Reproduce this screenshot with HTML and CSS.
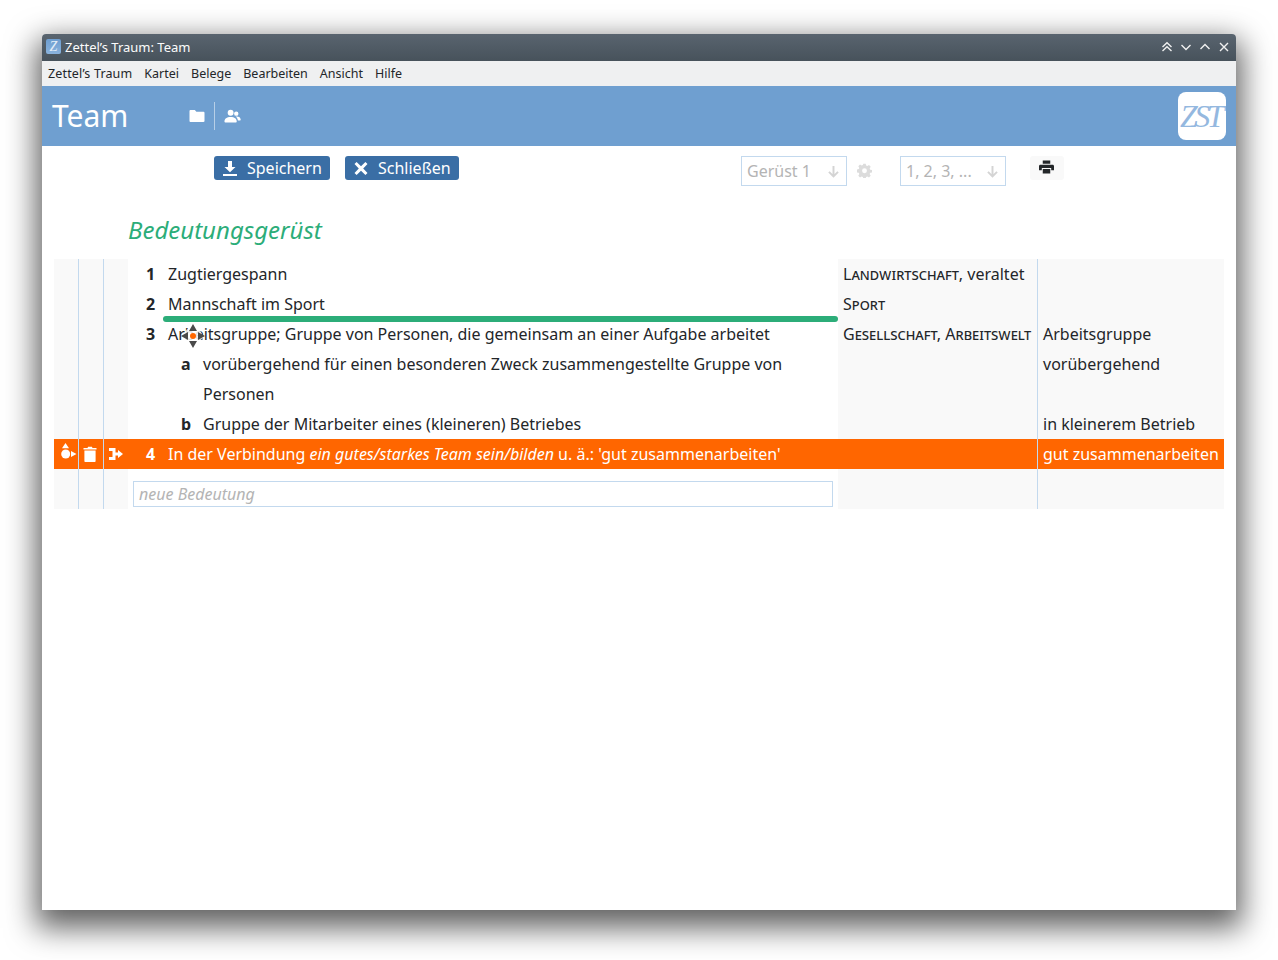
FILE: index.html
```html
<!DOCTYPE html>
<html lang="de">
<head>
<meta charset="utf-8">
<title>Zettel's Traum: Team</title>
<link rel="stylesheet" href="styles.css">
</head>
<body>
<div class="window">
  <div class="titlebar">
    <span class="app-icon">Z</span>
    <span class="title-text">Zettel’s Traum: Team</span>
    <div class="win-controls">
      <svg viewBox="0 0 12 12" class="win-btn"><path d="M1.5 6 6 1.8 10.5 6M1.5 10 6 5.8 10.5 10"/></svg>
      <svg viewBox="0 0 12 12" class="win-btn"><path d="M1.5 4 6 8.5 10.5 4"/></svg>
      <svg viewBox="0 0 12 12" class="win-btn"><path d="M1.5 8 6 3.5 10.5 8"/></svg>
      <svg viewBox="0 0 12 12" class="win-btn"><path d="M2 2l8 8M10 2l-8 8"/></svg>
    </div>
  </div>
  <div class="menubar">
    <span class="menu-first">Zettel’s Traum</span><span>Kartei</span><span>Belege</span><span>Bearbeiten</span><span>Ansicht</span><span>Hilfe</span>
  </div>
  <header class="header">
    <h1 class="lemma">Team</h1>
    <div class="header-icons">
      <svg class="hicon folder" viewBox="0 0 16 14"><path d="M1.4 1h4.4l1.6 1.8h7.2c.5 0 .9.4.9.9v8.4c0 .5-.4.9-.9.9H1.4c-.5 0-.9-.4-.9-.9V1.900c0-.5.4-.9.900-.9z"/></svg>
      <span class="hsep"></span>
      <svg class="hicon users" viewBox="0 0 18 14"><circle cx="7" cy="3.600" r="3.100"/><path d="M.5 13c0-3.400 2.400-5 6.500-5s6.500 1.600 6.500 5c0 .5-.4.9-.9.900H1.400c-.5 0-.9-.4-.9-.9z"/><circle cx="13" cy="4.500" r="2.300"/><path d="M12.300 7.500c3.300-.3 5.400.9 5.400 3.500 0 .4-.3.700-.7.700h-2.300c-.2-1.800-1-3.100-2.400-4.200z"/></svg>
    </div>
    <div class="logo"><span>ZST</span></div>
  </header>
  <div class="toolbar">
    <button class="btn btn-save">
      <svg class="btn-icon" viewBox="0 0 16 16"><path d="M6 1h4v6h3.500L8 12.300 2.500 7H6zM1 14h14v2H1z"/></svg>Speichern
    </button>
    <button class="btn btn-close">
      <svg class="btn-icon" viewBox="0 0 16 16"><path d="M3.600 2 8 6.300 12.400 2 14.500 4.100 10.200 8.500l4.300 4.400-2.100 2.100L8 10.700 3.600 15l-2.100-2.100 4.300-4.400-4.300-4.400z"/></svg>Schließen
    </button>
    <div class="select sel-geruest"><span>Gerüst 1</span><svg class="arrow" viewBox="0 0 12 12"><path d="M6 1v9.500M1.800 6.300 6 10.500l4.200-4.200"/></svg></div>
    <svg class="gear" viewBox="0 0 16 16"><path fill-rule="evenodd" d="M6.700.7h2.600l.4 2 1.300.6 1.800-1.100 1.800 1.800-1.100 1.800.6 1.300 2 .4v2.600l-2 .4-.6 1.300 1.100 1.800-1.800 1.800-1.800-1.100-1.300.6-.4 2H6.700l-.4-2-1.300-.6-1.800 1.100-1.800-1.800 1.100-1.800-.6-1.300-2-.4V6.900l2-.4.6-1.300-1.100-1.800 1.800-1.800 1.800 1.100 1.300-.6zM8 5.600a2.600 2.600 0 1 0 0 5.200 2.600 2.600 0 0 0 0-5.200z"/></svg>
    <div class="select sel-numbers"><span>1, 2, 3, ...</span><svg class="arrow" viewBox="0 0 12 12"><path d="M6 1v9.500M1.800 6.300 6 10.500l4.200-4.200"/></svg></div>
    <button class="print-btn" aria-label="Drucken">
      <svg viewBox="0 0 16 14"><path fill-rule="evenodd" d="M4 0h8v3.500H4zM1.500 4.500h13c.8 0 1.500.7 1.500 1.500v4.500h-3V8H3v2.500H0V6c0-.8.7-1.500 1.500-1.500zM4 9h8v5H4z"/></svg>
    </button>
  </div>
  <h2 class="section-title">Bedeutungsgerüst</h2>
  <div class="table-wrap">
    <div class="row">
      <div class="c1"></div><div class="c2"></div><div class="c3"></div>
      <div class="main"><b class="num">1</b><span>Zugtiergespann</span></div>
      <div class="cat"><span class="sc">Landwirtschaft</span>, veraltet</div>
      <div class="meaning"></div>
    </div>
    <div class="row">
      <div class="c1"></div><div class="c2"></div><div class="c3"></div>
      <div class="main"><b class="num">2</b><span>Mannschaft im Sport</span></div>
      <div class="cat"><span class="sc">Sport</span></div>
      <div class="meaning"></div>
    </div>
    <div class="row">
      <div class="c1"></div><div class="c2"></div><div class="c3"></div>
      <div class="main"><b class="num">3</b><span>Arbeitsgruppe; Gruppe von Personen, die gemeinsam an einer Aufgabe arbeitet</span></div>
      <div class="cat"><span class="sc">Gesellschaft, Arbeitswelt</span></div>
      <div class="meaning">Arbeitsgruppe</div>
    </div>
    <div class="row">
      <div class="c1"></div><div class="c2"></div><div class="c3"></div>
      <div class="main sub"><b class="num">a</b><span>vorübergehend für einen besonderen Zweck zusammengestellte Gruppe von Personen</span></div>
      <div class="cat"></div>
      <div class="meaning">vorübergehend</div>
    </div>
    <div class="row">
      <div class="c1"></div><div class="c2"></div><div class="c3"></div>
      <div class="main sub"><b class="num">b</b><span>Gruppe der Mitarbeiter eines (kleineren) Betriebes</span></div>
      <div class="cat"></div>
      <div class="meaning">in kleinerem Betrieb</div>
    </div>
    <div class="row active">
      <div class="c1">
        <svg class="ricon shift" viewBox="0 0 16 18"><path d="M4.500 0 8 5.200H1zM10 8l5.500 3-5.500 3z"/><circle cx="4.700" cy="11" r="4.500"/></svg>
      </div>
      <div class="c2">
        <svg class="ricon trash" viewBox="0 0 14 16"><path d="M.5 2h4l.6-1.200h3.800L9.500 2h4v1.600H.5zM1.400 4.600h11.200V15c0 .6-.4 1-1 1H2.400c-.6 0-1-.4-1-1z"/></svg>
      </div>
      <div class="c3">
        <svg class="ricon plug" viewBox="0 0 14 12"><path d="M0 0h6.500v4.500H9V2l5 4-5 4V7.500H6.500V12H0V9h3.500V3H0z"/></svg>
      </div>
      <div class="main"><b class="num">4</b><span>In der Verbindung <i>ein gutes/starkes Team sein/bilden</i> u. ä.: 'gut zusammenarbeiten'</span></div>
      <div class="cat"></div>
      <div class="meaning">gut zusammenarbeiten</div>
    </div>
    <div class="row new-row">
      <div class="c1"></div><div class="c2"></div><div class="c3"></div>
      <div class="main"><div class="new-input">neue Bedeutung</div></div>
      <div class="cat"></div>
      <div class="meaning"></div>
    </div>
    <div class="drop-bar"></div>
    <svg class="move-cursor" viewBox="0 0 26 26">
      <circle cx="13" cy="13" r="9" fill="#fff" fill-opacity=".85"/>
      <path d="M13 1l4 7H9zM13 25l-4-7h8zM1 13l7-4v8zM25 13l-7 4V9z" fill="#4a4a4a"/>
      <circle cx="13" cy="13" r="3" fill="#f60"/>
    </svg>
  </div>
</div>
</body>
</html>
```

FILE: styles.css
```css
* { box-sizing: border-box; }
html, body { margin: 0; padding: 0; background: #fff; height: 960px; overflow: hidden; }
body { padding: 34px 42px 50px; font-family: "Noto Sans", sans-serif; color: #232629; }

.window {
  position: relative;
  width: 1194px;
  height: 876px;
  background: #fff;
  border-radius: 4px 4px 0 0;
  box-shadow: 0 12px 30px 6px rgba(0,0,0,.62);
}

.titlebar {
  height: 27px;
  display: flex;
  align-items: center;
  padding: 0 6px 2px 4px;
  background: linear-gradient(#59646f, #47525b);
  color: #fcfcfc;
  border-radius: 4px 4px 0 0;
  font-size: 13px;
}
.app-icon {
  width: 15px; height: 15px;
  margin: 0 4px 0 0;
  background: linear-gradient(#6d9dd0, #8ab3dd);
  border-radius: 2px;
  color: #e4eef8;
  font: italic 14px/15px "Liberation Serif", serif;
  text-align: center;
}
.title-text { flex: 1; }
.win-controls { display: flex; gap: 7px; margin-top: 0; }
.win-btn { width: 12px; height: 12px; fill: none; stroke: #f0f0f0; stroke-width: 1.400; }

.menubar {
  height: 25px;
  display: flex;
  align-items: center;
  gap: 12px;
  padding-left: 6px;
  background: #eff0f1;
  font-size: 12.500px;
}
.menu-first { letter-spacing: .15px; }

.header {
  height: 60px;
  display: flex;
  align-items: center;
  background: #6f9fd0;
  color: #fff;
  padding: 0 10px;
}
.lemma { margin: 0; width: 137px; font-size: 30px; font-weight: 400; line-height: 60px; }
.header-icons { display: flex; align-items: center; }
.hicon { fill: #fff; display: block; }
.folder { width: 16px; height: 14px; }
.hsep { width: 1px; height: 28px; background: #b7cfe7; margin: 0 9px 0 9px; }
.users { width: 17px; height: 14px; }
.logo {
  margin-left: auto;
  width: 48px; height: 48px;
  background: #fff;
  border-radius: 8px;
  display: flex;
  align-items: center;
  justify-content: center;
  overflow: hidden;
}
.logo span { font: italic 32px/48px "Liberation Serif", serif; color: #94b8df; letter-spacing: -3.500px; margin-left: -3px; }

.toolbar {
  position: relative;
  height: 60px;
  display: flex;
  align-items: flex-start;
  padding: 10px 0 0 172px;
}
.btn {
  height: 24px;
  display: flex;
  align-items: center;
  border: 0;
  border-radius: 3px;
  background: #3a6ea5;
  color: #fff;
  font: 16px "Noto Sans", sans-serif;
  padding: 0 8px;
  margin: 0;
}
.btn-icon { width: 16px; height: 16px; fill: #fff; margin-right: 9px; }
.btn-save { width: 116px; }
.btn-close { width: 114px; margin-left: 15px; }
.select {
  height: 30px;
  width: 106px;
  border: 1px solid #c3d9ee;
  display: flex;
  align-items: center;
  justify-content: space-between;
  padding: 0 6px 0 5px;
  color: #b4b4b4;
  font-size: 16px;
}
.sel-geruest { margin-left: 282px; }
.sel-numbers { margin-left: 28px; }
.arrow { width: 13px; height: 13px; fill: none; stroke: #d4d4d4; stroke-width: 1.800; }
.gear { width: 15px; height: 15px; fill: #dcdcdc; margin: 7px 0 0 10px; flex: none; }
.print-btn {
  width: 34px; height: 24px;
  margin-left: 24px;
  border: 0; border-radius: 3px;
  padding: 0;
  background: #f9f9f9;
  display: flex; align-items: center; justify-content: center;
}
.print-btn svg { width: 15px; height: 14px; fill: #232629; margin: -2px 1px 0 0; }

.section-title {
  margin: 0;
  padding-left: 86px;
  height: 53px;
  font-size: 24px;
  font-weight: 400;
  font-style: italic;
  line-height: 48px;
  color: #2cad79;
}

.table-wrap { position: relative; margin: 0 12px; width: 1170px; }
.row {
  display: grid;
  grid-template-columns: 25px 25px 24px 710px 200px 186px;
  font-size: 16px;
  line-height: 30px;
}
.c1, .c2 { background: #f9f9f9; border-right: 1px solid #c3d9ee; display: flex; align-items: center; justify-content: center; }
.c3 { background: #f9f9f9; display: flex; align-items: center; justify-content: center; }
.main { display: flex; background: #fff; padding-left: 18px; min-width: 0; }
.num { width: 22px; flex: none; font-weight: 700; }
.sub { padding-left: 53px; }
.cat { background: #f9f9f9; border-right: 1px solid #c3d9ee; padding-left: 5px; white-space: nowrap; }
.sc { font-variant: small-caps; }
.meaning { background: #f9f9f9; padding-left: 5px; white-space: nowrap; }

.active .c1, .active .c2, .active .c3, .active .main, .active .cat, .active .meaning { background: #ff6600; color: #fff; }
.ricon { fill: #fff; width: 16px; height: 16px; display: block; }
.trash { width: 14px; height: 16px; margin-right: 2px; }
.shift { height: 18px; margin: -4px 0 0 6px; }
.plug { height: 12px; width: 14px; }

.new-row { height: 40px; }
.new-row .main { padding: 12px 5px 0; }
.new-input {
  width: 700px; height: 26px;
  border: 1px solid #c3d9ee;
  padding-left: 5px;
  font-style: italic;
  line-height: 24px;
  color: #b4b4b4;
}

.drop-bar {
  position: absolute;
  left: 109px; top: 57px;
  width: 675px; height: 6px;
  border-radius: 3px;
  background: #2cad79;
}
.move-cursor {
  position: absolute;
  left: 126px; top: 64px;
  width: 26px; height: 26px;
}
```
